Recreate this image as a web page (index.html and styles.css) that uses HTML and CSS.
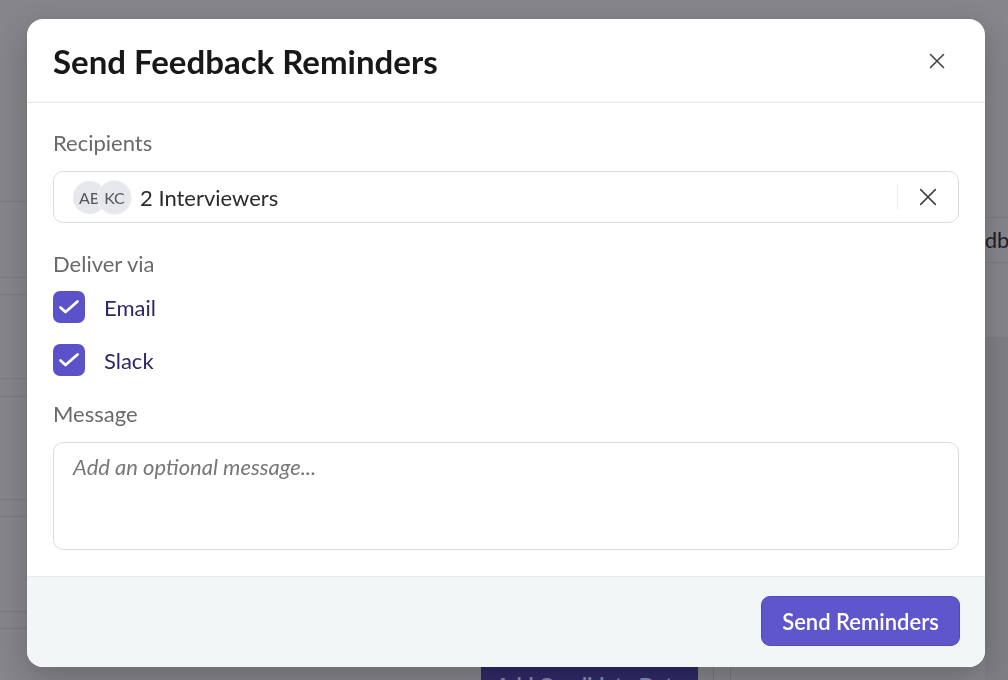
FILE: index.html
```html
<!DOCTYPE html>
<html lang="en">
<head>
<meta charset="utf-8">
<title>Send Feedback Reminders</title>
<link rel="stylesheet" href="styles.css">
</head>
<body>
<div class="page">
  <div class="pane-left">
    <div class="row r1"></div>
    <div class="row r2"></div>
    <div class="row r3"></div>
    <div class="row r4"></div>
    <div class="row r5"></div>
    <div class="row r6"></div>
    <div class="row r7"></div>
    <div class="row r8"></div>
    <div class="row r9"></div>
  </div>
  <div class="pane-main">
    <div class="main-bottom">
      <div class="bg-button">Add Candidate Data</div>
      <div class="bg-sep"></div>
    </div>
  </div>
  <div class="pane-right">
    <div class="rrow rr1"></div>
    <div class="rrow rr2"><span class="bg-feedback">Feedback</span></div>
    <div class="rrow rr3"></div>
    <div class="rrow rr4"></div>
  </div>
</div>

<div class="modal" role="dialog" aria-labelledby="modal-title">
  <header class="modal-header">
    <h1 id="modal-title" class="modal-title">Send Feedback Reminders</h1>
    <button class="icon-btn close-btn" aria-label="Close">
      <svg width="16" height="16" viewBox="0 0 16 16" fill="none" stroke="#444" stroke-width="1.6" stroke-linecap="round"><path d="M1.5 1.5 L14.5 14.5 M14.5 1.5 L1.5 14.5"/></svg>
    </button>
  </header>
  <div class="modal-body">
    <div class="field">
      <div class="field-label">Recipients</div>
      <div class="select">
        <div class="avatars">
          <span class="avatar">AB</span>
          <span class="avatar avatar-2">KC</span>
        </div>
        <span class="select-value">2 Interviewers</span>
        <span class="select-divider"></span>
        <button class="icon-btn clear-btn" aria-label="Clear">
          <svg width="18" height="18" viewBox="0 0 16 16" fill="none" stroke="#444" stroke-width="1.45" stroke-linecap="round"><path d="M1.5 1.5 L14.5 14.5 M14.5 1.5 L1.5 14.5"/></svg>
        </button>
      </div>
    </div>

    <div class="field field-deliver">
      <div class="field-label">Deliver via</div>
      <div class="checks">
        <label class="check">
          <span class="check-box">
            <svg width="32" height="32" viewBox="0 0 32 32" fill="none" stroke="#fff" stroke-width="2.8" stroke-linecap="round" stroke-linejoin="round"><path d="M7.5 16.5 L12.5 21 L24.5 10.5"/></svg>
          </span>
          <span class="check-label">Email</span>
        </label>
        <label class="check">
          <span class="check-box">
            <svg width="32" height="32" viewBox="0 0 32 32" fill="none" stroke="#fff" stroke-width="2.8" stroke-linecap="round" stroke-linejoin="round"><path d="M7.5 16.5 L12.5 21 L24.5 10.5"/></svg>
          </span>
          <span class="check-label">Slack</span>
        </label>
      </div>
    </div>

    <div class="field field-message">
      <div class="field-label">Message</div>
      <div class="textarea"><span class="placeholder">Add an optional message...</span></div>
    </div>
  </div>
  <footer class="modal-footer">
    <button class="primary-btn">Send Reminders</button>
  </footer>
</div>
</body>
</html>
```
FILE: styles.css
```css
* { box-sizing: border-box; }

html, body {
  margin: 0;
  padding: 0;
  height: 680px;
  overflow: hidden;
}

body {
  font-family: Lato, "Open Sans", "Liberation Sans", sans-serif;
  background: #86858b;
}

/* dimmed page underneath */
.page {
  display: flex;
  height: 680px;
}

.pane-left {
  width: 27px;
  display: flex;
  flex-direction: column;
}
.row { border-bottom: 1px solid #7b7a80; }
.r1 { height: 202px; }
.r2 { height: 76px; }
.r3 { height: 17px; }
.r4 { height: 84px; }
.r5 { height: 18px; }
.r6 { height: 103px; }
.r7 { height: 17px; }
.r8 { height: 95px; }
.r9 { height: 17px; }

.pane-main {
  flex: 1;
  display: flex;
  flex-direction: column;
  justify-content: flex-end;
}
.main-bottom {
  display: flex;
  height: 13px;
  padding-left: 454px;
  overflow: hidden;
}
.bg-button {
  width: 217px;
  height: 40px;
  background: #2f2a66;
  color: #8c88b2;
  font-size: 21px;
  font-weight: 700;
  text-align: center;
  padding-top: 6px;
  line-height: 24px;
  white-space: nowrap;
}
.bg-sep {
  width: 18px;
  margin-left: 15px;
  border-left: 1px solid #77767c;
  border-right: 1px solid #77767c;
}

.pane-right {
  width: 23px;
  display: flex;
  flex-direction: column;
}
.rrow { border-bottom: 1px solid #7b7a80; }
.rr1 { height: 218px; }
.rr2 {
  height: 45px;
  overflow: hidden;
  white-space: nowrap;
  font-size: 22px;
  line-height: 44px;
  color: #1f1f24;
}
.bg-feedback { display: inline-block; margin-left: -35px; }
.rr3 { height: 74px; border-bottom: none; }
.rr4 { flex: 1; background: #7f7e84; border-bottom: none; }

/* modal */
.modal {
  position: fixed;
  top: 19px;
  left: 27px;
  width: 958px;
  height: 648px;
  background: #fff;
  border-radius: 16px;
  box-shadow: 0 10px 30px rgba(0, 0, 0, 0.22);
  display: flex;
  flex-direction: column;
  overflow: hidden;
}

.modal-header {
  height: 84px;
  flex: none;
  display: flex;
  align-items: center;
  justify-content: space-between;
  padding: 0 40px 0 26px;
  border-bottom: 1px solid #e6e6e8;
}

.modal-title {
  margin: 0;
  font-size: 33px;
  font-weight: 700;
  color: #18181a;
  line-height: 40px;
}

.icon-btn {
  border: 0;
  background: none;
  padding: 0;
  display: flex;
  align-items: center;
  justify-content: center;
  cursor: pointer;
}

.modal-body {
  flex: 1;
  padding: 28px 26px 26px;
  display: flex;
  flex-direction: column;
}

.field-label {
  font-size: 22px;
  line-height: 24px;
  color: #6a6a6e;
}

.select {
  margin-top: 16px;
  height: 52px;
  border: 1px solid #dcdcdf;
  border-radius: 10px;
  display: flex;
  align-items: center;
  padding: 0 21px 0 19px;
}

.avatars { display: flex; }
.avatar {
  width: 33px;
  height: 33px;
  border-radius: 50%;
  background: #e7e8eb;
  color: #555559;
  font-size: 16px;
  display: flex;
  align-items: center;
  justify-content: center;
  overflow: hidden;
  white-space: nowrap;
}
.avatar-2 {
  margin-left: -8px;
  box-shadow: 0 0 0 1px #f4f4f6;
}

.select-value {
  margin-left: 9px;
  font-size: 22px;
  color: #2b2b2f;
  flex: 1;
}

.select-divider {
  width: 1px;
  height: 26px;
  background: #ececee;
  margin-right: 21px;
}

.field-deliver { margin-top: 29px; }

.checks {
  margin-top: 15px;
  display: flex;
  flex-direction: column;
  gap: 21px;
}
.check {
  display: flex;
  align-items: center;
  cursor: pointer;
}
.check-box {
  width: 32px;
  height: 32px;
  border-radius: 7px;
  background: #5b52c9;
  display: flex;
  align-items: center;
  justify-content: center;
}
.check-label {
  margin-left: 19px;
  font-size: 22px;
  color: #2e2769;
}

.field-message { margin-top: 26px; }

.textarea {
  margin-top: 16px;
  height: 108px;
  border: 1px solid #dcdcdf;
  border-radius: 10px;
  padding: 12px 19px;
}
.placeholder {
  font-size: 22px;
  line-height: 24px;
  font-style: italic;
  color: #77777b;
}

.modal-footer {
  height: 91px;
  flex: none;
  border-top: 1px solid #e6e9ec;
  background: #f3f6f7;
  display: flex;
  justify-content: flex-end;
  align-items: flex-start;
  padding: 19px 25px 0;
}

.primary-btn {
  height: 50px;
  width: 199px;
  border: 1px solid #5249bf;
  border-radius: 9px;
  background: #5f56cc;
  color: #fff;
  font-family: Lato, "Open Sans", "Liberation Sans", sans-serif;
  font-size: 22px;
  font-weight: 600;
  cursor: pointer;
}
```
